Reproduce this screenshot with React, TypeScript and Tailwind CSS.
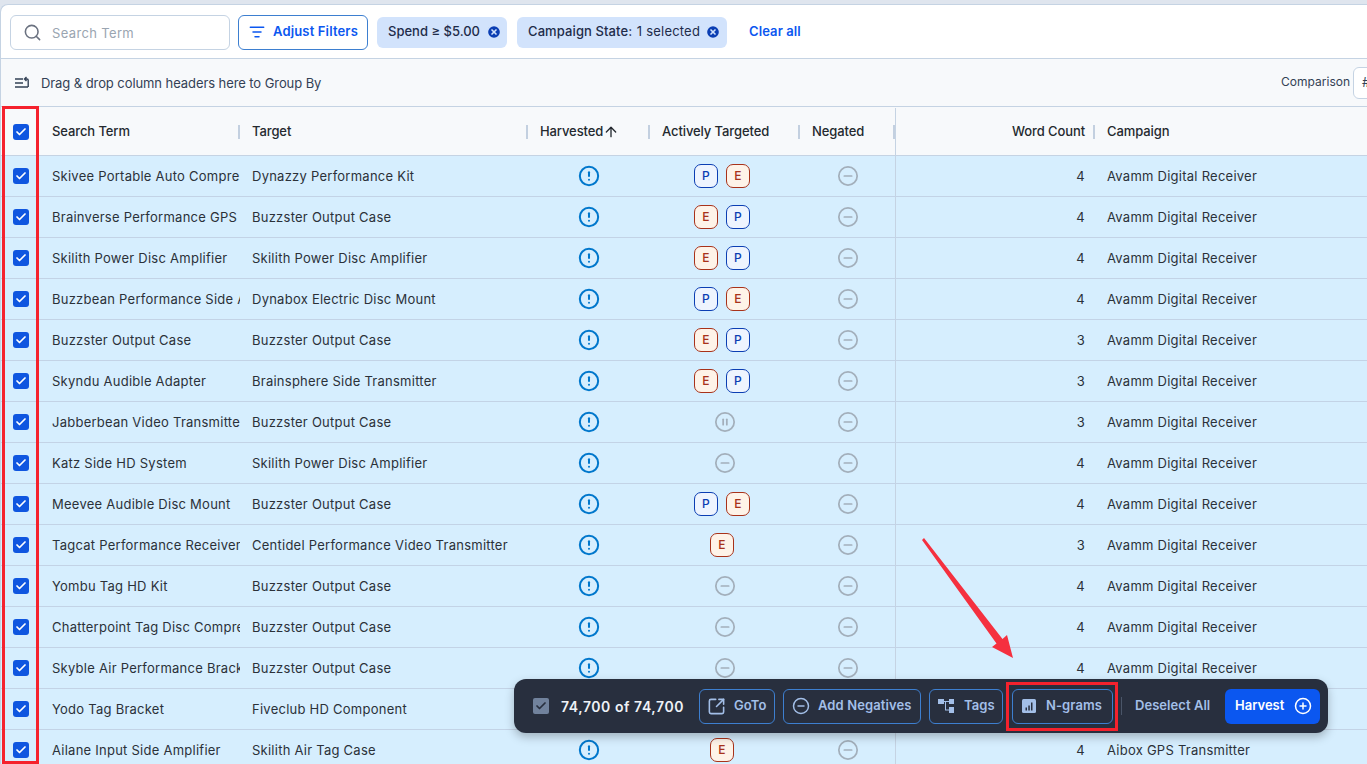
import { ArrowUp, CircleAlert, CircleMinus, CirclePause, CirclePlus, CircleX, ListFilter, Search, SquareArrowOutUpRight, Check } from "lucide-react";

type Tag = "P" | "E" | "pause" | "none";

const rows: { term: string; target: string; tags: Tag[]; count: number; campaign?: string }[] = [
  { term: "Skivee Portable Auto Compressor", target: "Dynazzy Performance Kit", tags: ["P", "E"], count: 4 },
  { term: "Brainverse Performance GPS Tracker", target: "Buzzster Output Case", tags: ["E", "P"], count: 4 },
  { term: "Skilith Power Disc Amplifier", target: "Skilith Power Disc Amplifier", tags: ["E", "P"], count: 4 },
  { term: "Buzzbean Performance Side Amplifier", target: "Dynabox Electric Disc Mount", tags: ["P", "E"], count: 4 },
  { term: "Buzzster Output Case", target: "Buzzster Output Case", tags: ["E", "P"], count: 3 },
  { term: "Skyndu Audible Adapter", target: "Brainsphere Side Transmitter", tags: ["E", "P"], count: 3 },
  { term: "Jabberbean Video Transmitter", target: "Buzzster Output Case", tags: ["pause"], count: 3 },
  { term: "Katz Side HD System", target: "Skilith Power Disc Amplifier", tags: ["none"], count: 4 },
  { term: "Meevee Audible Disc Mount", target: "Buzzster Output Case", tags: ["P", "E"], count: 4 },
  { term: "Tagcat Performance Receiver", target: "Centidel Performance Video Transmitter", tags: ["E"], count: 3 },
  { term: "Yombu Tag HD Kit", target: "Buzzster Output Case", tags: ["none"], count: 4 },
  { term: "Chatterpoint Tag Disc Compressor", target: "Buzzster Output Case", tags: ["none"], count: 4 },
  { term: "Skyble Air Performance Bracket", target: "Buzzster Output Case", tags: ["none"], count: 4 },
  { term: "Yodo Tag Bracket", target: "Fiveclub HD Component", tags: ["none"], count: 4 },
  { term: "Ailane Input Side Amplifier", target: "Skilith Air Tag Case", tags: ["E"], count: 4, campaign: "Aibox GPS Transmitter" },
];

const grid = "grid grid-cols-[39px_200px_288px_122px_150px_95px_1px_199px_273px] items-stretch";

function Box() {
  return (
    <span className="flex h-4 w-4 items-center justify-center rounded-[3px] bg-[#0f56e0]">
      <Check className="h-3 w-3 text-white" strokeWidth={3.5} />
    </span>
  );
}

function Sep() {
  return <span className="absolute right-0 top-1/2 h-[14px] w-[2px] -translate-y-1/2 bg-[#c3d0e0]" />;
}

function TagBadge({ tag }: { tag: Tag }) {
  if (tag === "pause") return <CirclePause className="h-[22px] w-[22px] text-[#a3afbb]" strokeWidth={1.9} />;
  if (tag === "none") return <CircleMinus className="h-[22px] w-[22px] text-[#a3afbb]" strokeWidth={1.9} />;
  if (tag === "P")
    return (
      <span className="flex h-6 w-6 items-center justify-center rounded-[7px] border border-[#0b3eb3] bg-[#eef4fe] text-[12px] font-medium text-[#0b3eb3]">
        P
      </span>
    );
  return (
    <span className="flex h-6 w-6 items-center justify-center rounded-[7px] border border-[#a8321a] bg-[#fef3e8] text-[12px] font-medium text-[#a8321a]">
      E
    </span>
  );
}

function GroupIcon() {
  return (
    <svg viewBox="0 0 16 14" className="h-[14px] w-4 text-[#334155]" fill="none" stroke="currentColor" strokeWidth="1.4">
      <path d="M1 3h8M1 7h8M1 11h13" />
      <path d="M11.500 3h1.500a1.200 1.200 0 0 1 1.200 1.200V11M12.500 1l-2 2 2 2" />
    </svg>
  );
}

function TagsIcon() {
  return (
    <svg viewBox="0 0 16 14" className="h-[14px] w-4 text-[#a3bfe8]" fill="currentColor">
      <path d="M0 0h6v5H0zM11 0h5v5h-5zM11 8h5v6h-5zM6 2h5v1H8v7.500h3v1H7V3H6z" />
    </svg>
  );
}

function GramsIcon() {
  return (
    <svg viewBox="0 0 14 14" className="h-[14px] w-[14px]">
      <rect width="14" height="14" rx="1.500" fill="#a3bfe8" />
      <path d="M3.500 8.500h1.500v3H3.500zM6.300 6.500h1.500v5H6.300zM9 3.500h1.500v8H9z" fill="#282f3e" />
    </svg>
  );
}

function BarButton({ icon, label, cls }: { icon: React.ReactNode; label: string; cls: string }) {
  return (
    <button className={`flex h-[35px] shrink-0 items-center rounded-md border border-[#3d7fd0] text-[13px] font-semibold tracking-[0.1px] text-[#a3bfe8] ${cls}`}>
      {icon}
      {label}
    </button>
  );
}

export default function App() {
  return (
    <div className="relative h-screen w-full overflow-hidden bg-[#dfe5ee] pt-[4px] font-['Inter',sans-serif] text-[#24292f]">
      <div className="flex h-full flex-col overflow-hidden rounded-tl-lg border-l border-t border-[#c5d3e3] bg-white">
        <div className="flex h-[54px] shrink-0 items-center border-b border-[#c5d3e3] pl-[9px] pt-[1px]">
          <div className="flex h-[35px] w-[220px] items-center gap-[10px] rounded-md border border-[#c5d3e3] pl-[12px] text-[13px] tracking-[0.35px] text-[#9aa5b1]">
            <Search className="h-[19px] w-[19px] text-[#6b7280]" />
            <span className="pt-[3px]">Search Term</span>
          </div>
          <button className="ml-2 flex h-[35px] w-[130px] items-center gap-[8px] rounded-md border border-[#3d7fd0] pl-[10px] text-[13px] font-semibold tracking-[0.15px] text-[#0b57f0]">
            <ListFilter className="h-[16px] w-[16px]" strokeWidth={2.25} />
            Adjust Filters
          </button>
          <span className="ml-[9px] flex h-[31px] w-[130px] shrink-0 items-center gap-[6px] rounded-md bg-[#d2e3fc] pl-[11px] text-[13px] font-medium text-[#1e2c4a]">
            Spend ≥ $5.00
            <CircleX className="h-4 w-4 fill-[#0b3eb3] text-[#d2e3fc]" strokeWidth={2.5} />
          </span>
          <span className="ml-[10px] flex h-[31px] w-[210px] shrink-0 items-center gap-[5px] rounded-md bg-[#d2e3fc] pl-[11px] text-[13px] font-medium text-[#1e2c4a]">
            <span className="tracking-[0.1px]">
              Campaign State: <span className="ml-[1px] font-normal tracking-[0.2px]">1 selected</span>
            </span>
            <CircleX className="h-4 w-4 fill-[#0b3eb3] text-[#d2e3fc]" strokeWidth={2.5} />
          </span>
          <span className="ml-[22px] text-[13px] font-semibold tracking-[0.1px] text-[#0b57f0]">Clear all</span>
        </div>

        <div className="flex h-[48px] shrink-0 items-center gap-[11px] border-b border-[#c5d3e3] bg-[#f7f9fb] pl-[13px] text-[13px] tracking-[-0.08px] text-[#334155]">
          <GroupIcon />
          <span className="pt-[3px]">Drag &amp; drop column headers here to Group By</span>
          <span className="-mr-[8px] -mt-[2px] ml-auto text-[12px] tracking-normal">Comparison</span>
          <span className="-mr-[40px] flex h-8 w-[54px] shrink-0 items-center rounded-md border border-[#c5d3e3] bg-white pl-2 text-[13px]">
            #
          </span>
        </div>

        <div className={`${grid} h-[49px] shrink-0 border-b border-[#c5d3e3] bg-[#f7f9fb] pt-[1px] text-[13px] font-medium tracking-[-0.1px]`}>
          <div className="flex items-center pl-3"><Box /></div>
          <div className="relative flex items-center pl-3">Search Term<Sep /></div>
          <div className="relative flex items-center pl-3">Target<Sep /></div>
          <div className="relative flex items-center pl-3">Harvested<ArrowUp className="h-4 w-4" strokeWidth={2} /><Sep /></div>
          <div className="relative flex items-center pl-3">Actively Targeted<Sep /></div>
          <div className="relative flex items-center pl-3">Negated<Sep /></div>
          <div className="bg-[#c5d3e3]" />
          <div className="relative flex items-center justify-end pr-[10px]">Word Count<Sep /></div>
          <div className="flex items-center pl-3">Campaign</div>
        </div>

        <div className="min-h-0 flex-1 bg-[#d6eefe]">
          {rows.map((r) => (
            <div key={r.term} className={`${grid} h-[41px] border-b border-[#c3d3e6] text-[13px] tracking-[0.25px] text-[#2b3139]`}>
              <div className="flex items-center pl-3"><Box /></div>
              <div className="flex items-center overflow-hidden whitespace-nowrap pl-3 pt-[2px]">{r.term}</div>
              <div className="flex items-center overflow-hidden whitespace-nowrap pl-3 pt-[2px]">{r.target}</div>
              <div className="flex items-center justify-center">
                <CircleAlert className="h-[22px] w-[22px] text-[#0077cc]" strokeWidth={2.2} />
              </div>
              <div className={`flex items-center justify-center gap-2 ${r.tags[0] === "P" || r.tags[0] === "E" ? "pr-[6px]" : ""}`}>
                {r.tags.map((t) => <TagBadge key={t} tag={t} />)}
              </div>
              <div className="flex items-center justify-center">
                <CircleMinus className="h-[22px] w-[22px] text-[#a3afbb]" strokeWidth={1.9} />
              </div>
              <div className="bg-[#c5d3e3]" />
              <div className="flex items-center justify-end pr-[10px] pt-[2px]">{r.count}</div>
              <div className="flex items-center pl-3 pt-[2px]">{r.campaign ?? "Avamm Digital Receiver"}</div>
            </div>
          ))}
        </div>
      </div>

      {/* annotations on top of the screenshot */}
      <div className="absolute left-[2px] top-[106px] h-[658px] w-[37px] border-[3px] border-[#f5222d]" />
      <svg className="absolute left-[915px] top-[530px]" width="110" height="135" viewBox="0 0 110 135" fill="#f5303f">
        <path d="M7 10 L9 8 L87.500 109 L92 105 L98 128 L77 117 L81.500 113.500 Z" />
      </svg>

      <div className="absolute left-[514px] top-[679px] flex h-[54px] w-[814px] items-center rounded-xl bg-[#282f3e] pl-[19px] shadow-[0_4px_10px_rgba(0,0,0,0.25)]">
        <span className="flex h-4 w-4 shrink-0 items-center justify-center rounded-[2px] bg-[#71829c]">
          <Check className="h-3 w-3 text-[#282f3e]" strokeWidth={3.5} />
        </span>
        <span className="ml-[12px] w-[123px] shrink-0 whitespace-nowrap text-[14px] font-semibold tracking-[0.55px] text-[#eef2f7]">74,700 of 74,700</span>
        <div className="ml-[15px] flex items-center gap-2">
          <BarButton icon={<SquareArrowOutUpRight className="-mx-[2px] h-[19px] w-[19px]" strokeWidth={2} />} label="GoTo" cls="w-[76px] gap-[10px] pl-[9px]" />
          <BarButton icon={<CircleMinus className="-mx-[1px] h-[18px] w-[18px]" strokeWidth={2} />} label="Add Negatives" cls="w-[138px] gap-[9px] pl-[9px]" />
          <BarButton icon={<TagsIcon />} label="Tags" cls="w-[74px] gap-[10px] pl-[8px]" />
          <span className="ml-px">
            <BarButton icon={<GramsIcon />} label="N-grams" cls="w-[101px] gap-[10px] pl-[9px]" />
          </span>
        </div>
        <span className="ml-[8px] h-[18px] w-px shrink-0 bg-[#4a5568]" />
        <span className="ml-[13px] w-[76px] shrink-0 whitespace-nowrap text-[13px] font-semibold tracking-[0.05px] text-[#a3bfe8]">Deselect All</span>
        <button className="ml-[14px] flex h-[35px] w-[95px] shrink-0 items-center gap-[10px] rounded-md bg-[#0b57f0] pl-[10px] text-[13px] font-semibold text-white">
          Harvest
          <CirclePlus className="h-[18px] w-[18px]" strokeWidth={2} />
        </button>
      </div>
      <div className="absolute left-[1006px] top-[682px] h-[49px] w-[112px] border-[3px] border-[#f5222d]" />
    </div>
  );
}
